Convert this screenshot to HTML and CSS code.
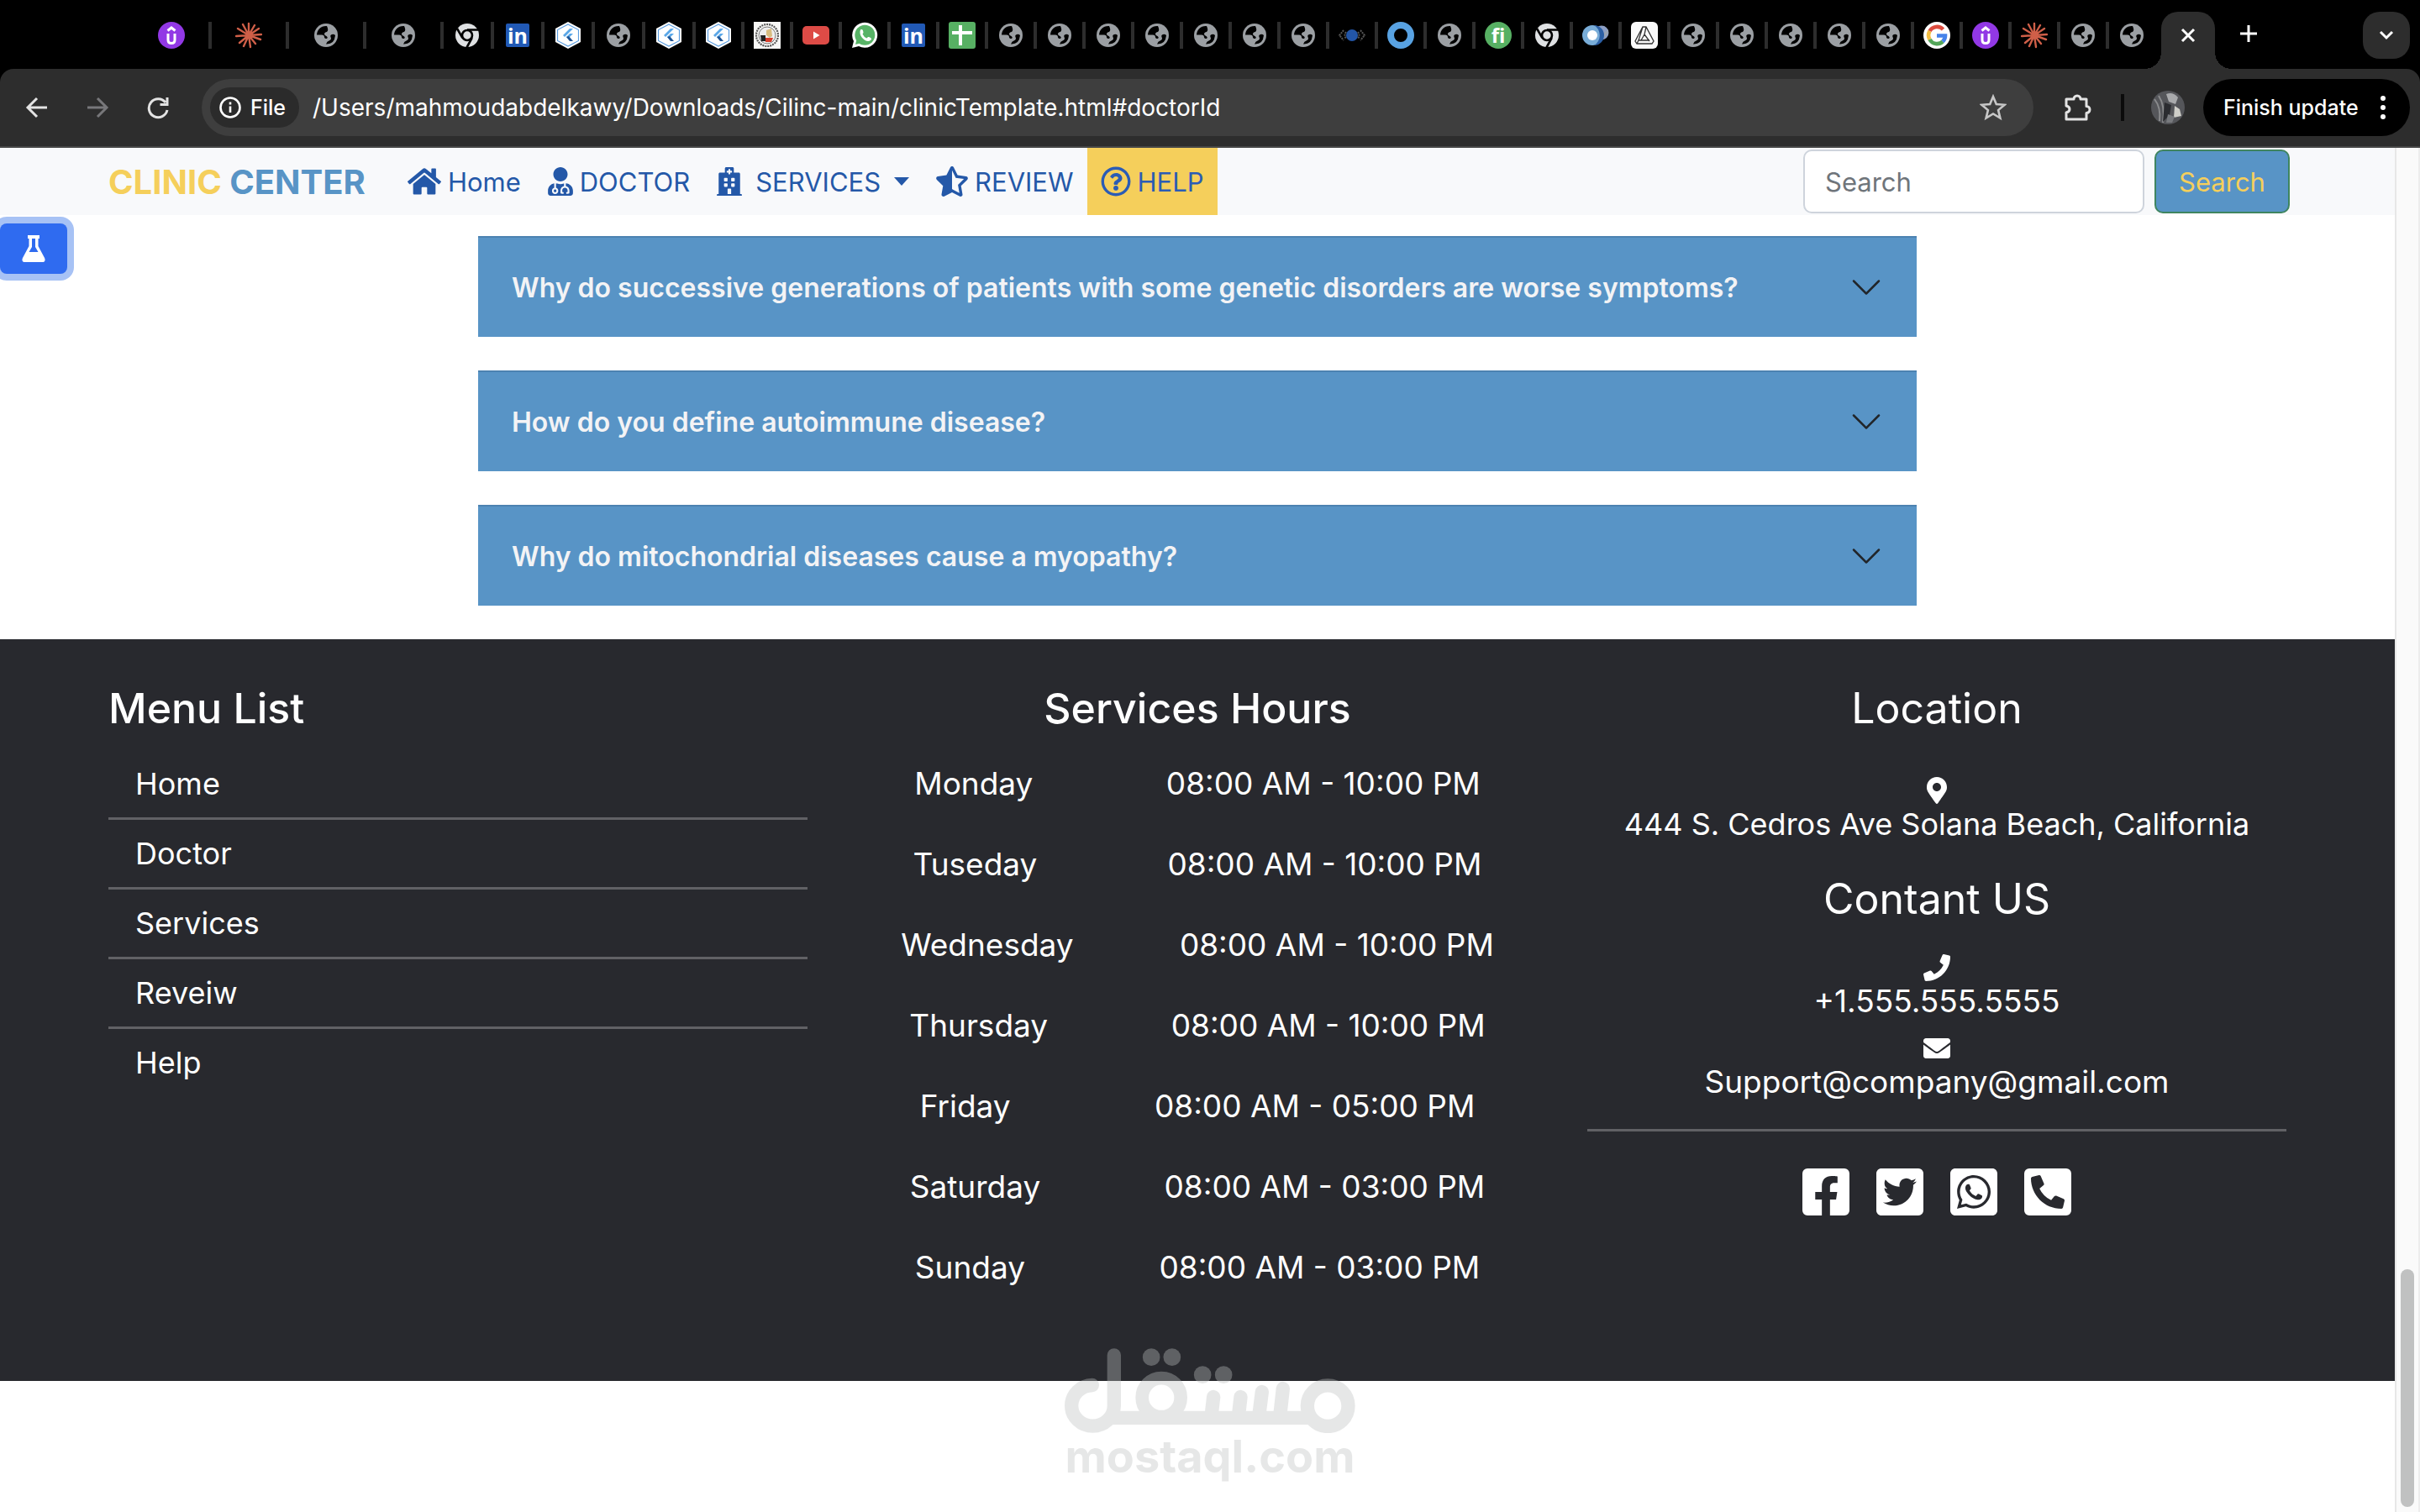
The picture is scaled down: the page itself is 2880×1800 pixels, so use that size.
FILE: index.html
```html
<!DOCTYPE html>
<html lang="en">
<head>
<meta charset="utf-8">
<title>Clinic Center</title>
<link rel="stylesheet" href="styles.css">
</head>
<body>
<svg class="sprite" aria-hidden="true">
  <symbol id="globe" viewBox="0 0 32 32"><circle cx="16" cy="16" r="14" fill="#9b9fa3"/><path d="M17 5C10 4.500 5.500 9 5 15.500H11q3 0 3 3 .3 1.800 2.500 1.400Q19 19 16.500 17q-2.500-1-2.500-2.500 0-2 3-2.500Q19.500 10 17 5z" fill="#000"/><path d="M27 16Q25 14 23 15 20.500 16 21.500 18q1.500 3-1.500 4.200-3 1-4 4.300Q26 27 27 16z" fill="#000"/></symbol>
  <symbol id="udemy" viewBox="0 0 32 32"><circle cx="16" cy="16" r="16" fill="#9238e5"/><path d="M11.500 10.500 16 7l4.500 3.500M12 14v7.500q0 4 4 4t4-4V14" fill="none" stroke="#fff" stroke-width="3"/></symbol>
  <symbol id="burst" viewBox="0 0 32 32"><path d="M16 16V2M16 16l7-12M16 16l12-8M16 16l15-1M16 16l14 5M16 16l8 10M16 16l2 14M16 16l-6 13M16 16 5 25M16 16 1 17M16 16 3 8M16 16 9 3" stroke="#cf5f48" stroke-width="2.400" stroke-linecap="round"/></symbol>
  <symbol id="chrome" viewBox="0 0 32 32"><circle cx="16" cy="16" r="14" fill="#dfe1e3"/><path d="M16 9.500H29M21.700 19.200 15.500 30.500M10.400 19.200 4 8" stroke="#000" stroke-width="2.600"/><circle cx="16" cy="16" r="6" fill="#dfe1e3" stroke="#000" stroke-width="2.600"/></symbol>
  <symbol id="flutter" viewBox="0 0 32 32"><path d="M16 0 31 8v16l-15 8L1 24V8z" fill="#fff"/><path d="m16 3 12.500 6.500v13L16 29 3.500 22.500v-13z" fill="none" stroke="#5b9de0" stroke-width="1.200"/><path d="M18 8h4L12 18l-2-2zM18 14h4l-6 6-2-2z" fill="#5aa7e8"/><path d="m14 18 3-1 5 6h-4z" fill="#1f5596"/></symbol>
  <symbol id="seal" viewBox="0 0 32 32"><path d="M0 0h32v32H0z" fill="#f7f7f5"/><circle cx="16" cy="16" r="13" fill="none" stroke="#555" stroke-width="2.200" stroke-dasharray="2 1"/><circle cx="16" cy="16" r="10" fill="#eee" stroke="#777"/><path d="M8 16h6v7H9z" fill="#222"/><path d="M14 19h9l-2 5h-7z" fill="#d8402c"/><path d="m15 10 6-2 1 9-3 2-4-3z" fill="#d8bd80"/></symbol>
  <symbol id="youtube" viewBox="0 0 32 32"><rect y="5" width="32" height="22" rx="5" fill="#dd4b46"/><path d="m13 11.500 7.500 4.500-7.500 4.500z" fill="#fff"/></symbol>
  <symbol id="wa-tab" viewBox="0 0 32 32"><path d="M1 31 3 23A15 15 0 1 1 9 29z" fill="#fff"/><circle cx="16.300" cy="15.800" r="12" fill="#57b366"/><path d="m5 27 1.500-6 4 4.500z" fill="#57b366"/><path d="M11 9.500c3-2 3.500 2.500 3.500 3.500l-1 1.500q1.500 3.500 5 5l1.500-1.500c1.500-.5 6 2 3 4-5 4-15-5-12-12.500z" fill="#fff"/></symbol>
  <symbol id="sheets" viewBox="0 0 32 32"><rect width="32" height="32" rx="3" fill="#57b063"/><path d="M14 4v24M4 13h24" stroke="#fff" stroke-width="4"/></symbol>
  <symbol id="eye" viewBox="0 0 32 32"><path d="m6 10-5 6 5 6M26 10l5 6-5 6M9 12q-3 4 0 8M23 12q3 4 0 8" fill="none" stroke="#555" stroke-width="2" stroke-dasharray="2 1"/><circle cx="16" cy="16" r="7" fill="#2356a8"/></symbol>
  <symbol id="donut" viewBox="0 0 32 32"><circle cx="16" cy="16" r="12" fill="none" stroke="#58a2e2" stroke-width="8"/></symbol>
  <symbol id="orbs" viewBox="0 0 32 32"><circle cx="23" cy="13" r="8.500" fill="#8d9fc5"/><path d="M16 27 31 14V9L20 18z" fill="#9aa5b5"/><circle cx="12" cy="16" r="12" fill="#79add8"/><path d="M14 4a12 12 0 0 1 0 24 14 14 0 0 0 0-24z" fill="#2b5fa5"/><circle cx="12" cy="16" r="6" fill="#fff"/></symbol>
  <symbol id="triangle" viewBox="0 0 32 32"><rect width="32" height="32" rx="6" fill="#fafafa"/><path d="M14 6h4l9 17-2 3H7l-2-3zM18 6l-2 9 6 8M14 6 9 22h13M16 15l-4 7M9 22l-2 4" fill="none" stroke="#333" stroke-width="1.300"/></symbol>
  <symbol id="google" viewBox="0 0 32 32"><circle cx="16" cy="16" r="16" fill="#fff"/><g fill="none" stroke-width="4.600"><path d="M23.500 9A10 10 0 0 0 7.500 11" stroke="#dd4b3e"/><path d="M7.500 11a10 10 0 0 0 0 10" stroke="#f3bd42"/><path d="M7.500 21a10 10 0 0 0 15.500 2.500" stroke="#53a659"/><path d="M16 16.500h10q0 4-3 7" stroke="#4683ea"/></g></symbol>
  <symbol id="caret-thin" viewBox="0 0 16 16"><path fill-rule="evenodd" d="M1.646 4.646a.5.5 0 0 1 .708 0L8 10.293l5.646-5.647a.5.5 0 0 1 .708.708l-6 6a.5.5 0 0 1-.708 0l-6-6a.5.5 0 0 1 0-.708z" fill="#212529"/></symbol>
</svg>

<header class="browser">
  <div class="tab-strip">
    <span class="tab wide"><svg><use href="#udemy"/></svg></span>
    <span class="tab wide"><svg><use href="#burst"/></svg></span>
    <span class="tab wide"><svg><use href="#globe"/></svg></span>
    <span class="tab wide"><svg><use href="#globe"/></svg></span>
    <span class="tab mid"><svg><use href="#chrome"/></svg></span>
    <span class="tab mid"><svg viewBox="0 0 32 32"><rect x="2" y="2" width="28" height="28" rx="2" fill="#2159b5"/><text x="16" y="26" text-anchor="middle" class="glyph-in">in</text></svg></span>
    <span class="tab mid"><svg><use href="#flutter"/></svg></span>
    <span class="tab mid"><svg><use href="#globe"/></svg></span>
    <span class="tab mid"><svg><use href="#flutter"/></svg></span>
    <span class="tab"><svg><use href="#flutter"/></svg></span>
    <span class="tab"><svg><use href="#seal"/></svg></span>
    <span class="tab"><svg><use href="#youtube"/></svg></span>
    <span class="tab"><svg><use href="#wa-tab"/></svg></span>
    <span class="tab"><svg viewBox="0 0 32 32"><rect x="2" y="2" width="28" height="28" rx="2" fill="#2159b5"/><text x="16" y="26" text-anchor="middle" class="glyph-in">in</text></svg></span>
    <span class="tab"><svg><use href="#sheets"/></svg></span>
    <span class="tab"><svg><use href="#globe"/></svg></span>
    <span class="tab"><svg><use href="#globe"/></svg></span>
    <span class="tab"><svg><use href="#globe"/></svg></span>
    <span class="tab"><svg><use href="#globe"/></svg></span>
    <span class="tab"><svg><use href="#globe"/></svg></span>
    <span class="tab"><svg><use href="#globe"/></svg></span>
    <span class="tab"><svg><use href="#globe"/></svg></span>
    <span class="tab"><svg><use href="#eye"/></svg></span>
    <span class="tab"><svg><use href="#donut"/></svg></span>
    <span class="tab"><svg><use href="#globe"/></svg></span>
    <span class="tab"><svg viewBox="0 0 32 32"><circle cx="16" cy="16" r="16" fill="#57b063"/><text x="16" y="25" text-anchor="middle" class="glyph-fi">fi</text></svg></span>
    <span class="tab"><svg><use href="#chrome"/></svg></span>
    <span class="tab"><svg><use href="#orbs"/></svg></span>
    <span class="tab"><svg><use href="#triangle"/></svg></span>
    <span class="tab"><svg><use href="#globe"/></svg></span>
    <span class="tab"><svg><use href="#globe"/></svg></span>
    <span class="tab"><svg><use href="#globe"/></svg></span>
    <span class="tab"><svg><use href="#globe"/></svg></span>
    <span class="tab"><svg><use href="#globe"/></svg></span>
    <span class="tab"><svg><use href="#google"/></svg></span>
    <span class="tab"><svg><use href="#udemy"/></svg></span>
    <span class="tab"><svg><use href="#burst"/></svg></span>
    <span class="tab"><svg><use href="#globe"/></svg></span>
    <span class="tab last"><svg><use href="#globe"/></svg></span>
    <button class="tab-active" type="button" aria-label="Close tab"><svg viewBox="0 0 20 20" width="20" height="20"><path d="m3 3 14 14M17 3 3 17" stroke="#fff" stroke-width="3"/></svg></button>
    <button class="tab-new" type="button" aria-label="New tab"><svg viewBox="0 0 24 24" width="24" height="24"><path d="M12 2v20M2 12h20" stroke="#fff" stroke-width="3"/></svg></button>
    <button class="tab-list" type="button" aria-label="Search tabs"><svg viewBox="0 0 20 20" width="20" height="20"><path d="m3 6 7 7 7-7" fill="none" stroke="#fff" stroke-width="3"/></svg></button>
  </div>

  <div class="toolbar">
    <div class="history">
      <button type="button" aria-label="Back"><svg viewBox="0 0 28 28" width="28" height="28"><path d="M26 14H4M14 3 3 14l11 11" fill="none" stroke="#e3e3e3" stroke-width="3"/></svg></button>
      <button type="button" aria-label="Forward"><svg viewBox="0 0 28 28" width="28" height="28"><path d="M2 14h22M14 3l11 11-11 11" fill="none" stroke="#77777a" stroke-width="3"/></svg></button>
      <button type="button" aria-label="Reload"><svg viewBox="0 0 28 28" width="28" height="28"><path d="M23 8A11 11 0 1 0 25 17M25 2v8.500h-8.500" fill="none" stroke="#e3e3e3" stroke-width="3"/></svg></button>
    </div>
    <form class="address">
      <button class="chip" type="button"><svg viewBox="0 0 28 28" width="28" height="28"><circle cx="14" cy="14" r="11.500" fill="none" stroke="#fff" stroke-width="2.600"/><path d="M14 12.500v7.500M14 7.500v3" stroke="#fff" stroke-width="2.600"/></svg>File</button>
      <input type="text" aria-label="Address" value="/Users/mahmoudabdelkawy/Downloads/Cilinc-main/clinicTemplate.html#doctorId">
      <button class="star" type="button" aria-label="Bookmark"><svg viewBox="0 0 32 32" width="32" height="32"><path d="m16 3 3.800 9 9.700.8-7.400 6.300 2.300 9.500L16 23.500l-8.400 5.100 2.300-9.500-7.400-6.300 9.700-.8z" fill="none" stroke="#c7c7c7" stroke-width="2.600"/></svg></button>
    </form>
    <button class="ext" type="button" aria-label="Extensions"><svg viewBox="0 0 36 36" width="36" height="36"><path d="M5 8h9a3.500 3.500 0 0 1 8 0h7v8.500a3.500 3.500 0 0 1 0 8V32H5v-8q4-1 4-4t-4-4z" fill="none" stroke="#e3e3e3" stroke-width="3" stroke-linejoin="round"/></svg></button>
    <span class="split"></span>
    <svg class="avatar" viewBox="0 0 40 40" width="40" height="40"><circle cx="20" cy="20" r="20" fill="#55565a"/><path d="M4 10q8 10 6 26M9 6q8 12 5 32" stroke="#8a8b8d" stroke-width="2" fill="none"/><path d="M18 4q8-3 14 4l-3 8-8-3z" fill="#a9aaac"/><path d="m16 14 8 3-2 12-8 8z" fill="#2b2c30"/><path d="m28 18 6 4 2 8-9 2z" fill="#cfcfc9"/><path d="m20 28 8 3-3 7h-7z" fill="#77797d"/></svg>
    <button class="update" type="button">Finish update<svg viewBox="0 0 8 28" width="8" height="28"><circle cx="4" cy="3" r="3" fill="#fff"/><circle cx="4" cy="14" r="3" fill="#fff"/><circle cx="4" cy="25" r="3" fill="#fff"/></svg></button>
  </div>
</header>

<div class="viewport">
  <div class="page">
    <nav class="site-nav">
      <a class="brand" href="#"><span>CLINIC</span> CENTER</a>
      <ul class="links">
        <li><a href="#home"><svg viewBox="0 0 576 512" width="40" height="36"><path d="M280.37 148.26L96 300.11V464a16 16 0 0 0 16 16l112.06-.29a16 16 0 0 0 15.920-16V368a16 16 0 0 1 16-16h64a16 16 0 0 1 16 16v95.640a16 16 0 0 0 16 16.050L464 480a16 16 0 0 0 16-16V300L295.670 148.260a12.190 12.190 0 0 0-15.300 0zM571.600 251.470L488 182.560V44.050a12 12 0 0 0-12-12h-56a12 12 0 0 0-12 12v72.610L318.470 43a48 48 0 0 0-61 0L4.340 251.470a12 12 0 0 0-1.600 16.900l25.500 31A12 12 0 0 0 45.150 301l235.220-193.740a12.190 12.190 0 0 1 15.300 0L530.900 301a12 12 0 0 0 16.900-1.600l25.500-31a12 12 0 0 0-1.700-16.930z"/></svg>Home</a></li>
        <li><a href="#doctorId"><svg viewBox="0 0 448 512" width="30" height="34"><path d="M224 256c70.700 0 128-57.300 128-128S294.700 0 224 0 96 57.300 96 128s57.300 128 128 128zM104 424c0 13.300 10.700 24 24 24s24-10.700 24-24-10.700-24-24-24-24 10.700-24 24zm216-135.400v49c36.500 7.400 64 39.800 64 78.400v41.700c0 7.600-5.400 14.200-12.900 15.700l-32.200 6.400c-4.300.9-8.500-1.900-9.400-6.300l-3.100-15.700c-.9-4.300 1.900-8.600 6.300-9.400l19.300-3.900V416c0-62.800-96-65.100-96 1.900v26.700l19.300 3.900c4.300.9 7.100 5.100 6.300 9.400l-3.100 15.700c-.9 4.300-5.100 7.100-9.400 6.300l-31.200-4.200c-7.900-1.100-13.800-7.800-13.800-15.900V416c0-38.600 27.500-70.900 64-78.400v-45.200c-2.200.7-4.400 1.100-6.600 1.900-18 6.300-37.300 9.800-57.400 9.800s-39.400-3.500-57.400-9.800c-7.400-2.600-14.900-4.200-22.600-5.200v81.600c23.100 6.900 40 28.100 40 53.400 0 30.900-25.100 56-56 56s-56-25.100-56-56c0-25.300 16.900-46.500 40-53.400v-80.400C48.500 301 0 355.800 0 422.400v44.800C0 491.900 20.100 512 44.800 512h358.400c24.700 0 44.800-20.100 44.800-44.800v-44.800c0-72-56.800-130.300-128-133.800z"/></svg>DOCTOR</a></li>
        <li><a class="services" href="#services"><svg viewBox="0 0 448 512" width="30" height="34"><path d="M448 492v20H0v-20c0-6.627 5.373-12 12-12h20V120c0-13.255 10.745-24 24-24h88V24c0-13.255 10.745-24 24-24h112c13.255 0 24 10.745 24 24v72h88c13.255 0 24 10.745 24 24v360h20c6.627 0 12 5.373 12 12zM308 192h-40c-6.627 0-12 5.373-12 12v40c0 6.627 5.373 12 12 12h40c6.627 0 12-5.373 12-12v-40c0-6.627-5.373-12-12-12zm-168 64h40c6.627 0 12-5.373 12-12v-40c0-6.627-5.373-12-12-12h-40c-6.627 0-12 5.373-12 12v40c0 6.627 5.373 12 12 12zm104 128h-40c-6.627 0-12 5.373-12 12v84h64v-84c0-6.627-5.373-12-12-12zm64-96h-40c-6.627 0-12 5.373-12 12v40c0 6.627 5.373 12 12 12h40c6.627 0 12-5.373 12-12v-40c0-6.627-5.373-12-12-12zm-116 12c0-6.627-5.373-12-12-12h-40c-6.627 0-12 5.373-12 12v40c0 6.627 5.373 12 12 12h40c6.627 0 12-5.373 12-12v-40zM182 96h26v26a6 6 0 0 0 6 6h20a6 6 0 0 0 6-6V96h26a6 6 0 0 0 6-6V70a6 6 0 0 0-6-6h-26V38a6 6 0 0 0-6-6h-20a6 6 0 0 0-6 6v26h-26a6 6 0 0 0-6 6v20a6 6 0 0 0 6 6z"/></svg>SERVICES<svg viewBox="0 0 18 10" width="18" height="10"><path d="M0 0h18L9 10z"/></svg></a></li>
        <li><a href="#review"><svg viewBox="0 0 536 512" width="38" height="36"><path d="M508.550 171.510L362.180 150.200 296.770 17.810C290.890 5.980 279.420 0 267.950 0c-11.400 0-22.790 5.900-28.690 17.810l-65.430 132.380-146.380 21.290c-26.250 3.800-36.770 36.090-17.740 54.590l105.890 103-25.060 145.480C86.980 495.330 103.570 512 122.150 512c4.930 0 10-1.170 14.870-3.750l130.950-68.680 130.940 68.700c4.860 2.550 9.920 3.710 14.830 3.710 18.600 0 35.220-16.610 31.660-37.400l-25.030-145.490 105.910-102.980c19.040-18.500 8.520-50.800-17.730-54.600zm-121.740 123.200l-18.120 17.620 4.280 24.880 19.520 113.450-102.130-53.590-22.380-11.740.03-317.190 51.030 103.290 11.180 22.630 25.010 3.640 114.230 16.630-82.650 80.380z"/></svg>REVIEW</a></li>
        <li><a class="active" href="#help"><svg viewBox="0 0 512 512" width="36" height="36"><path d="M256 8C119.043 8 8 119.083 8 256c0 136.997 111.043 248 248 248s248-111.003 248-248C504 119.083 392.957 8 256 8zm0 448c-110.532 0-200-89.431-200-200 0-110.495 89.472-200 200-200 110.491 0 200 89.471 200 200 0 110.530-89.431 200-200 200zm107.244-255.200c0 67.052-72.421 68.084-72.421 92.863V300c0 6.627-5.373 12-12 12h-45.647c-6.627 0-12-5.373-12-12v-8.659c0-35.745 27.100-50.034 47.579-61.516 17.561-9.845 28.324-16.541 28.324-29.579 0-17.246-21.999-28.693-39.784-28.693-23.189 0-33.894 10.977-48.942 29.969-4.057 5.120-11.460 6.071-16.666 2.124l-27.824-21.098c-5.107-3.872-6.251-11.066-2.644-16.363C184.846 131.491 214.940 112 261.794 112c49.071 0 101.450 38.304 101.450 88.800zM298 368c0 23.159-18.841 42-42 42s-42-18.841-42-42 18.841-42 42-42 42 18.841 42 42z"/></svg>HELP</a></li>
      </ul>
      <form class="search">
        <input type="search" placeholder="Search" aria-label="Search">
        <button type="submit">Search</button>
      </form>
    </nav>

    <main class="faq">
      <button type="button">Why do successive generations of patients with some genetic disorders are worse symptoms?<svg width="40" height="40"><use href="#caret-thin"/></svg></button>
      <button type="button">How do you define autoimmune disease?<svg width="40" height="40"><use href="#caret-thin"/></svg></button>
      <button type="button">Why do mitochondrial diseases cause a myopathy?<svg width="40" height="40"><use href="#caret-thin"/></svg></button>
    </main>

    <footer class="footer">
      <div class="columns">
        <section>
          <h2>Menu List</h2>
          <ul class="menu">
            <li><a href="#home">Home</a></li>
            <li><a href="#doctorId">Doctor</a></li>
            <li><a href="#services">Services</a></li>
            <li><a href="#review">Reveiw</a></li>
            <li><a href="#help">Help</a></li>
          </ul>
        </section>
        <section class="centered">
          <h2>Services Hours</h2>
          <ul class="hours">
            <li><span>Monday</span><span>08:00 AM - 10:00 PM</span></li>
            <li><span>Tuseday</span><span>08:00 AM - 10:00 PM</span></li>
            <li><span>Wednesday</span><span>08:00 AM - 10:00 PM</span></li>
            <li><span>Thursday</span><span>08:00 AM - 10:00 PM</span></li>
            <li><span>Friday</span><span>08:00 AM - 05:00 PM</span></li>
            <li><span>Saturday</span><span>08:00 AM - 03:00 PM</span></li>
            <li><span>Sunday</span><span>08:00 AM - 03:00 PM</span></li>
          </ul>
        </section>
        <section class="centered contact">
          <h2>Location</h2>
          <p class="place"><svg viewBox="0 0 384 512" width="24" height="32"><path d="M172.268 501.670C26.970 291.031 0 269.413 0 192 0 85.961 85.961 0 192 0s192 85.961 192 192c0 77.413-26.970 99.031-172.268 309.670-9.535 13.774-29.930 13.773-39.464 0zM192 272c44.183 0 80-35.817 80-80s-35.817-80-80-80-80 35.817-80 80 35.817 80 80 80z"/></svg>444 S. Cedros Ave Solana Beach, California</p>
          <h2>Contant US</h2>
          <p><svg viewBox="0 0 512 512" width="32" height="32"><path d="M493.400 24.600l-104-24c-11.300-2.600-22.900 3.300-27.500 13.900l-48 112c-4.200 9.800-1.400 21.300 6.900 28l60.600 49.600c-36 76.700-98.900 140.500-177.200 177.200l-49.600-60.600c-6.800-8.300-18.200-11.100-28-6.900l-112 48C3.900 366.500-2 378.100.6 389.400l24 104C27.100 504.200 36.700 512 48 512c256.100 0 464-207.500 464-464 0-11.200-7.700-20.900-18.600-23.400z"/></svg>+1.555.555.5555</p>
          <p><svg viewBox="0 0 512 512" width="32" height="32"><path d="M502.300 190.800c3.900-3.100 9.700-.2 9.700 4.700V400c0 26.500-21.500 48-48 48H48c-26.500 0-48-21.500-48-48V195.600c0-5 5.700-7.800 9.700-4.700 22.400 17.400 52.100 39.500 154.100 113.600 21.100 15.400 56.700 47.800 92.200 47.600 35.700.3 72-32.800 92.300-47.600 102-74.100 131.600-96.300 154-113.700zM256 320c23.200.4 56.600-29.200 73.400-41.400 132.700-96.300 142.800-104.700 173.400-128.700 5.800-4.500 9.200-11.500 9.200-18.900v-19c0-26.500-21.500-48-48-48H48c-26.500 0-48 21.500-48 48v19c0 7.400 3.400 14.300 9.200 18.900 30.600 23.900 40.700 32.400 173.400 128.700 16.800 12.200 50.200 41.800 73.400 41.400z"/></svg>Support@company@gmail.com</p>
          <div class="social">
            <a href="#facebook" aria-label="Facebook"><svg viewBox="0 32 448 448"><path d="M400 32H48A48 48 0 0 0 0 80v352a48 48 0 0 0 48 48h137.250V327.690h-63V256h63v-54.640c0-62.150 37-96.480 93.670-96.480 27.140 0 55.520 4.840 55.520 4.840v61h-31.270c-30.810 0-40.420 19.120-40.420 38.730V256h68.780l-11 71.690h-57.780V480H400a48 48 0 0 0 48-48V80a48 48 0 0 0-48-48z"/></svg></a>
            <a href="#twitter" aria-label="Twitter"><svg viewBox="0 32 448 448"><path d="M400 32H48C21.500 32 0 53.500 0 80v352c0 26.500 21.500 48 48 48h352c26.500 0 48-21.500 48-48V80c0-26.500-21.500-48-48-48zm-48.900 158.800c.2 2.800.2 5.700.2 8.500 0 86.700-66 186.600-186.600 186.600-37.200 0-71.700-10.800-100.700-29.400 5.300.6 10.400.8 15.800.8 30.700 0 58.900-10.400 81.400-28-28.800-.6-53-19.500-61.300-45.500 10.100 1.500 19.200 1.500 29.600-1.200-30-6.100-52.500-32.500-52.500-64.400v-.8c8.700 4.900 18.900 7.900 29.600 8.300a65.447 65.447 0 0 1-29.200-54.600c0-12.200 3.200-23.400 8.900-33.100 32.300 39.800 80.800 65.800 135.200 68.600-9.300-44.500 24-80.600 64-80.600 18.900 0 35.900 7.900 47.900 20.700 14.800-2.800 29-8.300 41.600-15.800-4.900 15.200-15.200 28-28.800 36.100 13.200-1.400 26-5.100 37.800-10.200-8.900 13.100-20.100 24.700-32.900 34z"/></svg></a>
            <a href="#whatsapp" aria-label="WhatsApp"><svg viewBox="0 32 448 448"><path d="M224 122.800c-72.700 0-131.800 59.100-131.900 131.800 0 24.900 7 49.200 20.200 70.100l3.100 5-13.300 48.600 49.900-13.100 4.800 2.900c20.200 12 43.400 18.400 67.100 18.400h.1c72.600 0 133.300-59.100 133.300-131.800 0-35.200-15.200-68.300-40.100-93.200-25-25-58-38.700-93.200-38.700zm77.500 188.400c-3.300 9.300-19.100 17.700-26.700 18.800-12.600 1.900-22.400.9-47.500-9.900-39.700-17.200-65.700-57.200-67.700-59.800-2-2.600-16.200-21.500-16.200-41s10.200-29.100 13.900-33.100c3.600-4 7.900-5 10.600-5 2.600 0 5.300 0 7.600.1 2.400.1 5.700-.9 8.900 6.800 3.300 7.900 11.200 27.400 12.200 29.400s1.700 4.300.3 6.900c-7.600 15.200-15.700 14.600-11.600 21.600 15.300 26.300 30.600 35.400 53.900 47.100 4 2 6.300 1.700 8.600-1 2.300-2.600 9.900-11.600 12.500-15.500 2.600-4 5.300-3.300 8.900-2 3.600 1.300 23.100 10.900 27.100 12.900s6.600 3 7.600 4.600c.9 1.900.9 9.900-2.400 19.100zM400 32H48C21.500 32 0 53.500 0 80v352c0 26.500 21.500 48 48 48h352c26.500 0 48-21.500 48-48V80c0-26.500-21.500-48-48-48zM223.900 413.200c-26.600 0-52.700-6.700-75.800-19.300L64 416l22.500-82.200c-13.900-24-21.200-51.300-21.200-79.300C65.400 167.100 136.500 96 223.900 96c42.400 0 82.200 16.500 112.200 46.500 29.900 30 47.900 69.800 47.900 112.200 0 87.400-72.700 158.500-160.100 158.500z"/></svg></a>
            <a href="#phone" aria-label="Phone"><svg viewBox="0 32 448 448"><path d="M400 32H48A48 48 0 0 0 0 80v352a48 48 0 0 0 48 48h352a48 48 0 0 0 48-48V80a48 48 0 0 0-48-48zm-16.390 307.370l-15 65A15 15 0 0 1 354 416C194 416 64 286.290 64 126a15.700 15.700 0 0 1 11.630-14.610l65-15A18.230 18.230 0 0 1 144 96a16.270 16.270 0 0 1 13.790 9.090l30 70A17.900 17.900 0 0 1 189 181a17 17 0 0 1-5.500 11.610l-37.890 31a231.910 231.910 0 0 0 110.780 110.780l31-37.890A17 17 0 0 1 299 291a17.850 17.850 0 0 1 5.910 1.210l70 30A16.250 16.250 0 0 1 384 336a17.410 17.410 0 0 1-.39 3.370z"/></svg></a>
          </div>
        </section>
      </div>
    </footer>

    <button class="lab" type="button" aria-label="Lab"><svg viewBox="0 0 28 32" width="28" height="32"><path d="M7 0h14v4h-1.500v9L27 27q2 5-3 5H4q-5 0-3-5l7.500-14V4H7zm5 4v10l-3.500 6h11L16 14V4z" fill="#fff"/></svg></button>
  </div>
  <div class="scrollbar"><div class="thumb"></div></div>

  <div class="watermark">
    <svg viewBox="141 75 1037 303" width="346" height="101"><g fill="none" stroke="#bec1c1" stroke-width="49" stroke-linecap="round"><circle cx="1080" cy="281" r="73"/><circle cx="486" cy="251" r="69" stroke-width="47"/><path d="M317 100V281A76 73 0 1 1 239 207"/><path d="M300 323.500H1020" stroke-linecap="butt"/><path d="m672 249-8 70M769 249l-8 70M845 231l-11 88M920 219l-11 100"/></g><g fill="#bec1c1"><circle cx="450" cy="107" r="31"/><circle cx="524" cy="107" r="31"/><circle cx="633" cy="170" r="31"/><circle cx="708" cy="170" r="31"/></g></svg>
    <span>mostaql.com</span>
  </div>
</div>
</body>
</html>
```
FILE: styles.css
```css
* { box-sizing: border-box; }

body {
  margin: 0;
  min-height: 100vh;
  display: flex;
  flex-direction: column;
  background: #fff;
  font-family: Inter, "Liberation Sans", sans-serif;
}

button, input { font: inherit; border: 0; padding: 0; background: none; }
ul { list-style: none; margin: 0; padding: 0; }
a { color: inherit; text-decoration: none; }
svg { display: block; flex: none; }

.sprite { position: absolute; width: 0; height: 0; }
.glyph-in { font: 700 25px "Open Sans", sans-serif; fill: #fff; }
.glyph-fi { font: 700 24px "Open Sans", sans-serif; fill: #fff; }

/* Browser frame */
.browser { background: #000; }

.tab-strip {
  display: flex;
  align-items: flex-end;
  height: 82px;
  padding: 0 12px 0 160px;
}
.tab {
  display: flex;
  flex: none;
  justify-content: center;
  width: 58px;
  margin-bottom: 24px;
  border-right: 4px solid #2d2d2d;
}
.tab svg { width: 32px; height: 32px; }
.tab.wide { width: 92px; }
.tab.mid { width: 60px; }
.tab.last { border-color: transparent; }

.tab-active {
  position: relative;
  display: grid;
  place-items: center;
  width: 64px;
  height: 68px;
  margin-left: 4px;
  padding-bottom: 12px;
  border-radius: 20px 20px 0 0;
  background: #2d2d2d;
}
.tab-active::before, .tab-active::after {
  content: "";
  position: absolute;
  bottom: 0;
  width: 20px;
  height: 20px;
}
.tab-active::before { left: -20px; background: radial-gradient(circle at 0 0, transparent 20px, #2d2d2d 20px); }
.tab-active::after { right: -20px; background: radial-gradient(circle at 100% 0, transparent 20px, #2d2d2d 20px); }

.tab-new {
  display: grid;
  place-items: center;
  width: 40px;
  height: 40px;
  margin: 0 0 22px 20px;
}
.tab-list {
  display: grid;
  place-items: center;
  width: 56px;
  height: 56px;
  margin: 0 0 12px auto;
  border-radius: 20px;
  background: #2d2d2d;
}

.toolbar {
  display: flex;
  align-items: center;
  padding: 12px 12px 12px 24px;
  border-bottom: 2px solid #474747;
  border-radius: 16px 16px 0 0;
  background: #2d2d2d;
}
.history { display: flex; gap: 32px; margin-right: 32px; }
.history button, .ext {
  display: grid;
  place-items: center;
  width: 40px;
  height: 40px;
}
.address {
  display: flex;
  flex: 1;
  align-items: center;
  height: 68px;
  padding: 0 32px 0 10px;
  border-radius: 34px;
  background: #3e3e3e;
}
.chip {
  display: flex;
  align-items: center;
  gap: 10px;
  height: 48px;
  margin-right: 16px;
  padding: 0 16px 0 10px;
  border-radius: 24px;
  background: #2b2b2b;
  color: #fff;
  font-size: 25px;
  font-weight: 500;
}
.address input { flex: 1; min-width: 0; color: #fff; font-size: 28px; outline: 0; }
.ext { margin-left: 32px; }
.split { width: 4px; height: 32px; margin: 0 32px; background: #0b0b0b; }
.update {
  display: flex;
  align-items: center;
  justify-content: space-between;
  width: 246px;
  height: 68px;
  margin-left: 22px;
  padding: 0 28px 0 24px;
  border-radius: 34px;
  background: #000;
  color: #fff;
  font-size: 25px;
  font-weight: 500;
  white-space: nowrap;
}

/* Page area */
.viewport { position: relative; display: flex; flex: 1; }
.page { position: relative; flex: 1; min-width: 0; }

.site-nav {
  display: flex;
  align-items: center;
  height: 80px;
  padding: 0 125px 0 129px;
  background: #f8f9fb;
}
.brand { margin-right: 34px; color: #5894c6; font-size: 40px; font-weight: 700; white-space: nowrap; }
.brand span { color: #f5cf5b; }
.links { display: flex; color: #2458a8; font-size: 31px; fill: currentColor; }
.links a { display: flex; align-items: center; gap: 8px; height: 80px; padding: 0 16px; }
.links .services { gap: 16px; }
.links .active { background: #f5cf5b; color: #2b5cb5; }
.search { display: flex; gap: 12px; margin-left: auto; font-size: 31px; }
.search input {
  width: 406px;
  height: 76px;
  padding: 0 24px;
  border: 2px solid #ced4dc;
  border-radius: 10px;
  background: #fff;
}
.search input::placeholder { color: #6f757b; opacity: 1; }
.search button {
  width: 161px;
  border: 2px solid #3f8560;
  border-radius: 10px;
  background: #5894c6;
  color: #f5cf5b;
}

.faq {
  display: flex;
  flex-direction: column;
  gap: 40px;
  width: 65%;
  max-width: 1712px;
  margin: 0 auto;
  padding: 25px 0 40px;
}
.faq button {
  display: flex;
  align-items: center;
  justify-content: space-between;
  min-height: 120px;
  padding: 0 40px;
  border-top: 2px solid #4c82b1;
  background: #5894c6;
  color: #f3f3f5;
  font-size: 32px;
  font-weight: 600;
  text-align: left;
}

.footer { padding: 49px 0 79px; background: #28292e; color: #fff; fill: #fff; }
.columns {
  display: grid;
  grid-template-columns: repeat(3, 1fr);
  gap: 48px;
  max-width: 2640px;
  margin: 0 auto;
  padding: 0 24px;
  font-size: 37px;
}
.footer h2 { margin: 0 0 16px; font-size: 50px; font-weight: 500; line-height: 67px; }
.menu { font-size: 36px; line-height: 80px; }
.menu li { padding-left: 32px; }
.menu li + li { border-top: 3px solid #616165; }
.centered { text-align: center; }
.hours li { display: flex; justify-content: space-around; margin-bottom: 16px; line-height: 80px; }
.footer .contact h2 { margin-bottom: 32px; font-weight: 400; }
.contact p {
  display: flex;
  flex-direction: column;
  align-items: center;
  margin: 0 0 16px;
  line-height: 48px;
}
.footer .contact .place { margin: 48px 0 32px; font-size: 36px; }
.social {
  display: flex;
  justify-content: center;
  gap: 32px;
  margin-top: 32px;
  padding-top: 44px;
  border-top: 3px solid #616165;
}
.social svg { width: 56px; height: 56px; }

/* Floating button at the left edge */
.lab {
  position: absolute;
  top: 90px;
  left: 0;
  display: grid;
  place-items: center;
  width: 80px;
  height: 60px;
  border-radius: 8px;
  background: #2f6bf0;
  box-shadow: 0 0 0 8px #a7c2f5;
}

.scrollbar {
  display: flex;
  flex-direction: column;
  justify-content: flex-end;
  align-items: center;
  width: 30px;
  padding-bottom: 6px;
  border-left: 2px solid #e7e7e7;
  border-right: 2px solid #ededed;
  background: #fafafa;
}
.thumb { width: 16px; height: 283px; border-radius: 8px; background: #c0c1c1; }

.watermark {
  position: absolute;
  right: 0;
  bottom: 39px;
  left: 0;
  display: flex;
  flex-direction: column;
  align-items: center;
  color: #bec1c1;
  font-size: 54px;
  font-weight: 700;
  line-height: 55px;
  opacity: .37;
  pointer-events: none;
}
```
